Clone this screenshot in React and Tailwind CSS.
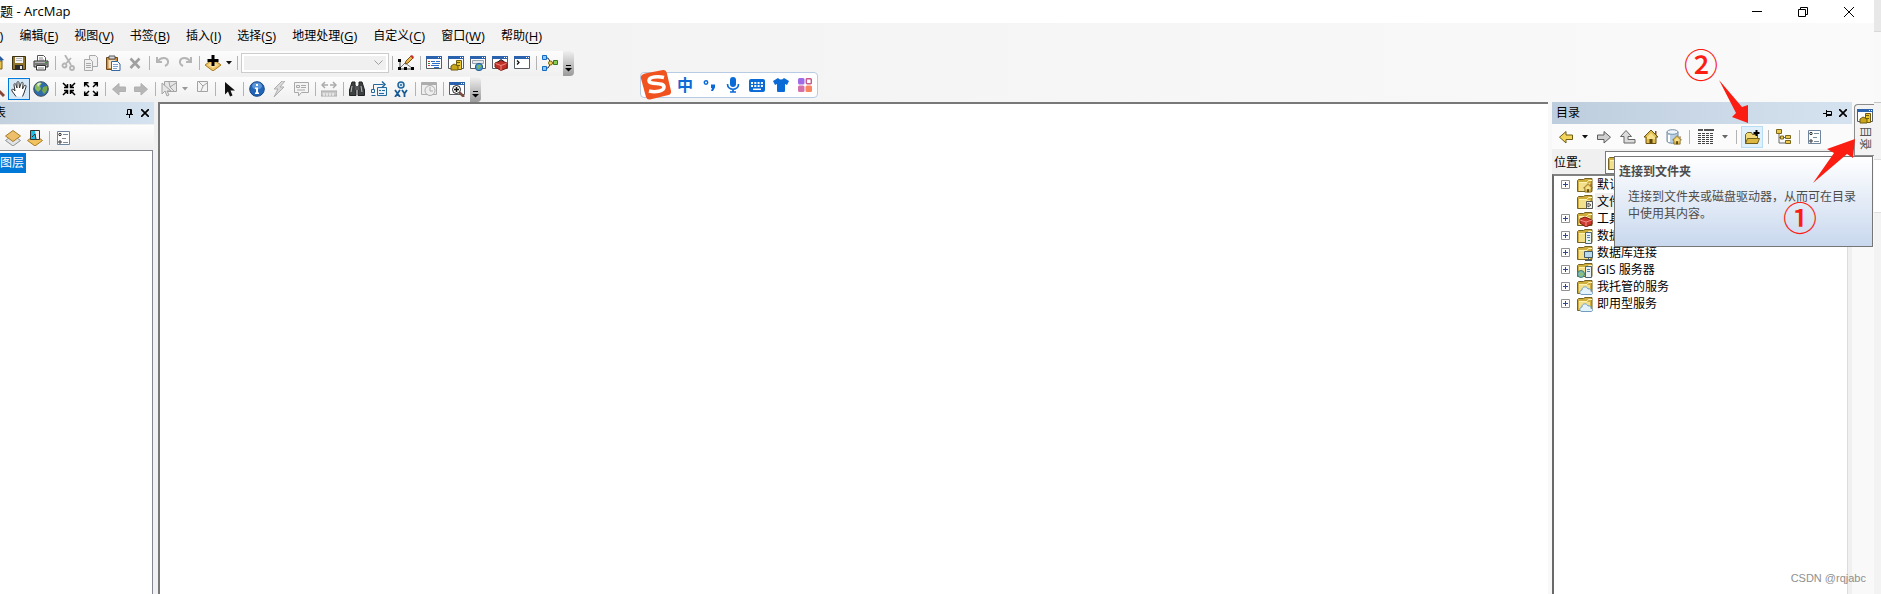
import clsx from 'clsx';

const menus = [
  ['文件', 'F'],
  ['编辑', 'E'],
  ['视图', 'V'],
  ['书签', 'B'],
  ['插入', 'I'],
  ['选择', 'S'],
  ['地理处理', 'G'],
  ['自定义', 'C'],
  ['窗口', 'W'],
  ['帮助', 'H'],
];

const treeItems = [
  { label: '默认', badge: 'home' },
  { label: '文件', badge: 'arrow', leaf: true, active: true },
  { label: '工具', badge: 'toolbox' },
  { label: '数据', badge: 'server' },
  { label: '数据库连接', badge: 'monitor' },
  { label: 'GIS 服务器', badge: 'gis' },
  { label: '我托管的服务', badge: 'cloud' },
  { label: '即用型服务', badge: 'cloud' },
];

// small pieces shared by several icons
const WindowFrame = ({ children }) => (
  <>
    <path d="M.5 1.500h15v12H.5z" fill="#fff" stroke="#565c64" />
    <path d="M0 1h16v3H0z" fill="#2b62ad" />
    <path d="M12 2h1v1h-1zM14 2h1v1h-1z" fill="#fff" />
    {children}
  </>
);

const House = () => (
  <>
    <path d="M8 1 1 8h2v6.500h10V8h2z" fill="#e0bb4e" stroke="#6b5311" />
    <path d="M12 2h1.500v4L12 5z" fill="#8a4b20" />
    <path d="M4 8l4-4 4 4v2H4z" fill="#f7e08c" />
    <path d="M6.500 10h3v4.500h-3z" fill="#5b4613" />
  </>
);

const ArrowLeft = ({ fill, stroke }) => (
  <path d="M8 2.500v3.500h6.500v4.500H8V14L1.500 8.200z" fill={fill} stroke={stroke} />
);

const icons = {
  open: (
    <>
      <path d="M1 6h12v8H1z" fill="#e6c14c" stroke="#7b5f10" />
      <path d="M7 1h4l4 4-3 1z" fill="#245a9c" />
    </>
  ),
  save: (
    <>
      <path d="M1.500 1.500h13v13h-13z" fill="#8e7328" stroke="#3a3113" />
      <path d="M4 2h8v6H4z" fill="#f4f4f4" />
      <path d="M5 3.500h6M5 5.500h6" stroke="#b5b5b5" />
      <path d="M4 10h8v5H4z" fill="#2b2b2b" />
      <path d="M9 11h2v3H9z" fill="#e8e8e8" />
    </>
  ),
  print: (
    <>
      <path d="M4.500 6V.5h6l2 2V6" fill="#fff" stroke="#555" />
      <path d="M6 3h4M6 5h5" stroke="#888" />
      <path d="M1 6h14v6H1z" fill="#b8b8b8" stroke="#333" />
      <path d="M2 9h12" stroke="#333" />
      <path d="M3.500 10.500h9v4.500h-9z" fill="#fff" stroke="#333" />
      <path d="M5 13h6" stroke="#888" />
      <path d="M12 7h2v1h-2z" fill="#3a9a3a" />
    </>
  ),
  cut: (
    <g fill="none" stroke="#b4b4b4" strokeWidth="1.800">
      <path d="M4 0l6 10M10 3L5 8.500" />
      <circle cx="3.500" cy="10.500" r="2" />
      <circle cx="11" cy="13" r="2" />
    </g>
  ),
  copy: (
    <g fill="#f1f1f1" stroke="#a9a9a9">
      <path d="M6.500.5h6l2 2v9h-8z" />
      <path d="M1.500 4.500h6l2 2v9h-8z" />
      <path d="M3 8.500h5M3 10.500h5M3 12.500h5" />
    </g>
  ),
  paste: (
    <>
      <path d="M1.500 2.500h11v12h-11z" fill="#c98f45" stroke="#6e4818" />
      <path d="M4 1h6v3H4z" fill="#d9d9d9" stroke="#555" />
      <path d="M3.500 5h7v8h-7z" fill="#f2dfbd" />
      <path d="M6.500 6.500h6l2.500 2.500v6.500H6.500z" fill="#fff" stroke="#35689f" />
      <path d="M8 9.500h5M8 11.500h5M8 13.500h4" stroke="#7da4cf" />
    </>
  ),
  remove: <path d="M3.500 3.500l9 9.500M12.500 3.500l-9 9.500" stroke="#a0a0a0" strokeWidth="2.600" />,
  undo: (
    <path d="M2 2v5h5M3 6c3-4 9-4 10 0 .6 3-1 4-3 5" fill="none" stroke="#b5b5b5" strokeWidth="2" />
  ),
  redo: (
    <path d="M14 2v5H9M13 6c-3-4-9-4-10 0-.6 3 1 4 3 5" fill="none" stroke="#b5b5b5" strokeWidth="2" />
  ),
  addData: (
    <>
      <path d="M8 4l8 6-8 6-8-6z" fill="#edc566" stroke="#a67b22" />
      <path d="M8 7l5 3-5 3-5-3z" fill="#f8e0a0" />
      <path d="M8 0v11M2.500 5.500h11" stroke="#000" strokeWidth="3" />
    </>
  ),
  editor: (
    <>
      <path d="M2 5v9h12" fill="none" stroke="#444" />
      <path d="M2 13l5-5 7 5" fill="none" stroke="#777" />
      <path d="M0 4h3v3H0zM0 12h3v3H0zM6 12h3v3H6zM13 12h3v3h-3z" fill="#000" />
      <path d="M7 9l1-3 5-5 2 2-5 5z" fill="#e8b84c" stroke="#7c5414" />
      <path d="M12 1l2-1 2 2-1 2z" fill="#c8312b" />
    </>
  ),
  toc: (
    <WindowFrame>
      <path d="M2 6.500h2M2 10.500h2" stroke="#c63c2e" />
      <path d="M2 8.500h2" stroke="#2d8a3c" />
      <path d="M5 6.500h4M10 6.500h4M6 8.500h8M5 10.500h8M8 12.500h5" stroke="#2f6fc4" />
    </WindowFrame>
  ),
  catalog: (
    <WindowFrame>
      <path d="M8.500 5.500h5v9h-5z" fill="#e9c72d" stroke="#6f5b10" />
      <path d="M9 7h3v1H9zM9 10h3v1H9z" fill="#6f5b10" />
      <path d="M3 11l3-2 4 2v4H3z" fill="#c9a51c" stroke="#6f5b10" />
    </WindowFrame>
  ),
  search: (
    <WindowFrame>
      <path d="M2.500 5.500h11v3h-11z" fill="#e5e7eb" stroke="#9ca3af" />
      <circle cx="9" cy="12" r="3.700" fill="#4b93cf" stroke="#276091" />
      <path d="M7 11c2-2 3 0 4-1v2c-2 0-1 2-3 2z" fill="#79b861" />
    </WindowFrame>
  ),
  toolboxWindow: (
    <WindowFrame>
      <path d="M3 8l6-2.500 6 2.500v5l-6 2.500-6-3.500z" fill="#c22f28" stroke="#7d1815" />
      <path d="M3.500 8.500l5.500 2 5.500-2M9 10.500v5" fill="none" stroke="#ef8b80" />
      <path d="M6 7l3-2.500 3 2" fill="none" stroke="#222" />
    </WindowFrame>
  ),
  python: (
    <WindowFrame>
      <path d="M3 5.500l2 2-2 2" fill="none" stroke="#111" strokeWidth="1.300" />
    </WindowFrame>
  ),
  model: (
    <>
      <path d="M3 3h3l3 5h3M3 13h3l3-5" fill="none" stroke="#333" />
      <path d="M.5.500h4v4h-4zM.5 11.500h4v4h-4z" fill="#8cc6f5" stroke="#1469c2" />
      <circle cx="8.500" cy="8" r="2" fill="#f3d352" stroke="#7d650e" />
      <path d="M11.500 5.500h4v4h-4z" fill="#8ccb56" stroke="#3a7a1c" />
    </>
  ),
  zoomIn: (
    <>
      <circle cx="6" cy="6" r="4.500" fill="#eef5fb" stroke="#555" />
      <path d="M9 9l6 6" stroke="#8a4433" strokeWidth="3" />
    </>
  ),
  pan: (
    <path
      d="M5 15.500L1 10c-1-2 1-2.500 2-1l1 1-1-6c0-2 1.600-2 2 0l1 3V2c0-2 2-2 2 0l.5 5L10 2.500c.5-2 2.300-1.500 2 .5L11.500 8l1.500-3c1-1.500 2.500-.8 2 1l-2 6-1.500 3.500"
      fill="#fff"
      stroke="#333"
    />
  ),
  globe: (
    <>
      <circle cx="8" cy="8" r="7.300" fill="#2f6cab" stroke="#3f4f5c" />
      <path d="M2 5c2-4 6-4 7-3L7 5l1 3-3 3-3-3z" fill="#8abb58" />
      <path d="M10 6l4-1c1 4-1 6-3 8l-2-3z" fill="#76aa49" />
      <path d="M4 3c2-2 4-1 4-1L5 6z" fill="#fff" opacity=".7" />
    </>
  ),
  shrink: (
    <g stroke="#000" strokeWidth="1.500" fill="none">
      <path d="M2 2l4 4M3 6.500h3.500V3M14 2l-4 4M13 6.500H9.500V3M2 14l4-4M3 9.500h3.500V13M14 14l-4-4M13 9.500H9.500V13" />
    </g>
  ),
  expand: (
    <g stroke="#000" strokeWidth="1.500" fill="none">
      <path d="M6 6L2 2M1.700 5.500V1.700h3.800M10 6l4-4M14.300 5.500V1.700h-3.800M6 10l-4 4M1.700 10.500v3.800h3.800M10 10l4 4M14.300 10.500v3.800h-3.800" />
    </g>
  ),
  prev: <ArrowLeft fill="#b7b7b7" stroke="#b0b0b0" />,
  next: (
    <g transform="matrix(-1 0 0 1 16 0)">
      <ArrowLeft fill="#b7b7b7" stroke="#b0b0b0" />
    </g>
  ),
  select: (
    <g fill="#e6e6e6" stroke="#a3a3a3">
      <path d="M3.500.5h12v10h-12z" />
      <path d="M8 1l1 5 6-4M9 6l4 4" fill="none" />
      <path d="M1 2v11l3-3 2 5 2-1-2-4h4z" />
    </g>
  ),
  clear: (
    <g fill="#f4f4f4" stroke="#a3a3a3">
      <path d="M4.500.5h10v10h-10z" />
      <path d="M6 1l4 4 4-3M10 5l-2 5" fill="none" />
    </g>
  ),
  pointer: <path d="M4 1v12.500l3-3 2 5 2.500-1-2-5H14z" fill="#111" />,
  info: (
    <>
      <circle cx="8" cy="8" r="7.300" fill="#2265b8" stroke="#164683" />
      <ellipse cx="8" cy="5" rx="5" ry="3.500" fill="#5b95da" />
      <path d="M7 3h2v2H7zM6 6.500h3v5h1V13H6v-1.500h1V8H6z" fill="#fff" />
    </>
  ),
  bolt: <path d="M11 0L3 8h4l-4 8L13 6H9l5-6z" fill="#d9d9d9" stroke="#adadad" />,
  html: (
    <g fill="#f4f4f4" stroke="#a9a9a9">
      <path d="M1.500 1.500h14v10h-7l-3 3.500v-3.500h-4z" />
      <path d="M3.500 4.500h3v2h-3zM8 4.500h5M8 6.500h5M4 9h8" />
    </g>
  ),
  measure: (
    <g fill="none" stroke="#a9a9a9">
      <path d="M1 4h6M9 4h6" strokeWidth="1.500" />
      <path d="M4 1L1 4l3 3M12 1l3 3-3 3" strokeWidth="1.500" />
      <path d="M0 10h16v5H0z" fill="#c9c9c9" />
      <path d="M3 12v3M6 12v3M9 12v3M12 12v3" stroke="#fff" />
    </g>
  ),
  find: (
    <>
      <path d="M3 1h3v3l1 2v8.500H.5V9zM13 1h-3v3L9 6v8.500h6.500V9z" fill="#3d4041" stroke="#222" />
      <path d="M6 5h4v4H6z" fill="#555" />
      <path d="M3 5L2 11M12 5l1 6" stroke="#bbb" />
    </>
  ),
  route: (
    <g fill="none" stroke="#246a9e">
      <path d="M2.500 8V3.500h10" />
      <path d="M11 .500l3 3-3 3" strokeWidth="1.500" />
      <path d="M6.500 6.500h9v8h-9z" fill="#e8f2fa" />
      <path d="M.5 8.500h3v3h-3zM.5 14.500h4M8 9.500h2M11 9.500h3M8 12.500h5" />
    </g>
  ),
  goToXY: (
    <>
      <circle cx="8" cy="4" r="3" fill="#d7e9f7" stroke="#20659b" strokeWidth="1.500" />
      <circle cx="8" cy="4" r="1" fill="#20659b" />
      <path d="M2 9l5 7M7 9l-5 7M9 9l2.500 3.500V16M14 9l-2.500 3.500" fill="none" stroke="#195b92" strokeWidth="1.800" />
    </>
  ),
  time: (
    <g fill="#eee" stroke="#adadad">
      <path d="M.5 1.500h15v12H.5z" />
      <path d="M1 3h14" strokeWidth="2" />
      <circle cx="9" cy="9.500" r="5" />
      <path d="M9 6v4h3" fill="none" />
    </g>
  ),
  viewer: (
    <WindowFrame>
      <circle cx="7.500" cy="8.500" r="4" fill="#fff" stroke="#222" />
      <path d="M5 8.500h5M7.500 6v5" stroke="#111" strokeWidth="1.500" />
      <path d="M10.500 11.500L15 16" stroke="#7c4c3c" strokeWidth="2.500" />
    </WindowFrame>
  ),
  layers: (
    <>
      <path d="M8 5l7.500 5.500L8 16 .5 10.500z" fill="#e1e3e4" stroke="#8d9293" />
      <path d="M8 .500L15.500 6 8 11.500.5 6z" fill="#edbf6a" stroke="#a77b27" />
    </>
  ),
  source: (
    <>
      <path d="M8 5l7.500 5.500L8 16 .5 10.500z" fill="#f1c25e" stroke="#a77b27" />
      <path d="M3.500.5h9v9h-9z" fill="#1fbbe0" stroke="#333" />
      <path d="M8 1l4 0v8H9V5z" fill="#eee" />
      <path d="M5 7l3-3 1 5" fill="none" stroke="#333" />
    </>
  ),
  options: (
    <>
      <path d="M2.500 1.500h12v13h-12z" fill="#fff" stroke="#6f859e" />
      <path d="M8 4.500h5M7 8.500h4M8 12.500h5" stroke="#7e8b99" />
      <circle cx="5" cy="4.500" r="1.200" fill="none" stroke="#222" />
      <circle cx="5" cy="12" r="1.200" fill="none" stroke="#222" />
    </>
  ),
  goBack: <ArrowLeft fill="#f2d45b" stroke="#6f5c15" />,
  goForward: (
    <g transform="matrix(-1 0 0 1 16 0)">
      <ArrowLeft fill="#d0d0d0" stroke="#5c5c5c" />
    </g>
  ),
  goUp: <path d="M6 1.500L.5 7.500H4v6.500h11v-3.500H8v-3h3.500z" fill="#dcdcdc" stroke="#666" />,
  home: <House />,
  database: (
    <>
      <path d="M1 3v9c0 3 11 3 11 0V3" fill="#b9d0e4" stroke="#7189a0" />
      <ellipse cx="6.500" cy="3" rx="5.500" ry="2.300" fill="#eef6fc" stroke="#7189a0" />
      <path d="M3 6v7" stroke="#fff" strokeWidth="2" />
      <g transform="translate(6 6) scale(.63)">
        <House />
      </g>
    </>
  ),
  table: (
    <g stroke="#444" shapeRendering="crispEdges">
      <path d="M0 1h16" strokeWidth="2" strokeDasharray="5 .5" stroke="#555" />
      <path d="M0 4.500h16M0 6.500h16M0 8.500h16M0 10.500h16M0 12.500h16M0 14.500h16" strokeDasharray="3 1" />
    </g>
  ),
  connect: (
    <>
      <path d="M1.500 14.500v-9l2-2h4l1 2h5v9z" fill="#f0d777" stroke="#6f5d1a" />
      <path d="M1.500 14.500l2-5h12l-2 5z" fill="#dcb840" stroke="#6f5d1a" />
      <path d="M12.500 1v6M9.500 4h6" stroke="#000" strokeWidth="2" />
    </>
  ),
  tree: (
    <>
      <path d="M3 4v10h6M3 8.500h6" fill="none" stroke="#666" />
      <path d="M.5.500h5v4h-5zM9.500 6.500h5v3h-5zM9.500 11.500h5v3h-5zM4.500 7h3v3h-3z" fill="#e9c94f" stroke="#7a651c" />
    </>
  ),
};

const Icon = ({ name, className = 'size-4' }) => (
  <svg viewBox="0 0 16 16" className={clsx('shrink-0', className)} aria-hidden="true">
    {icons[name]}
  </svg>
);

const badges = {
  home: (
    <g transform="translate(6 6) scale(.63)">
      <House />
    </g>
  ),
  arrow: <path d="M9.500 7.500h6v7h-6zM11 9l3 2-3 2z" fill="#f4f4e8" stroke="#555" />,
  toolbox: (
    <>
      <path d="M3 8l5-2 7 3v4l-6 3-6-4z" fill="#cc3a30" stroke="#7d1815" />
      <path d="M3 9l6 2 6-2M9 11v4" fill="none" stroke="#f09186" />
    </>
  ),
  server: (
    <>
      <path d="M8.500 4.500h6v11h-6z" fill="#e9f0f5" stroke="#4d6475" />
      <path d="M10 7.500h3M10 9.500h3" stroke="#4f83ab" />
      <path d="M11 12.500h2" stroke="#3b9b47" />
    </>
  ),
  monitor: (
    <>
      <path d="M7.500 6.500h8v6h-8z" fill="#b8d9ed" stroke="#45586a" />
      <path d="M11.500 13v2M8 15.500h7" stroke="#45586a" />
    </>
  ),
  gis: (
    <>
      <path d="M8.500 4.500h6v11h-6z" fill="#e9f0f5" stroke="#4d6475" />
      <path d="M10 7.500h3M10 9.500h3" stroke="#4f83ab" />
      <circle cx="4" cy="12" r="3.500" fill="#79b9bf" stroke="#417c6a" />
      <path d="M2 11l3-1 1 3-3 1z" fill="#8fc06a" />
    </>
  ),
  cloud: (
    <path d="M5 15.500c-3 0-3-4 0-4.500 0-4 5-4 6-1 2-1 3 1 3 2.500 3 0 2 3 0 3z" fill="#e4f2fc" stroke="#6f9cbf" />
  ),
};

const FolderIcon = ({ badge }) => (
  <svg viewBox="0 0 16 16" className="size-4 shrink-0" aria-hidden="true">
    <path d="M.5 14.500v-11l1-1h5l1.500-1h7v13z" fill="#cfae3d" stroke="#756323" />
    <path d="M2 6h11v8H2z" fill="#f3e08c" />
    <path d="M2 5.500h8l1.500-2H15" fill="none" stroke="#fff3b4" />
    {badges[badge]}
  </svg>
);

const ToolButton = ({ name, label, active, className }) => (
  <button
    type="button"
    aria-label={label || name}
    className={clsx(
      'flex h-[22px] w-[22px] shrink-0 items-center justify-center',
      active && 'border border-[#0078d7] bg-[#d5e8f7]',
      className
    )}
  >
    <Icon name={name} />
  </button>
);

const Separator = ({ className = 'w-1.5' }) => (
  <span className={clsx('flex shrink-0 justify-center', className)}>
    <span className="h-[14px] w-px bg-[#b3b3b3]" />
  </span>
);

const Caret = ({ className = 'w-2.5', color = '#111' }) => (
  <button type="button" aria-label="更多" className={clsx('flex shrink-0 justify-center', className)}>
    <svg viewBox="0 0 6 4" className="h-1 w-1.5">
      <path d="M0 0h6L3 3.500z" fill={color} />
    </svg>
  </button>
);

const Overflow = () => (
  <button
    type="button"
    aria-label="工具条选项"
    className="ml-0.5 flex h-[25px] w-[11px] shrink-0 items-end justify-center rounded-r-sm bg-linear-to-b from-[#f0f0f0] to-[#9a9a9a] pb-1"
  >
    <svg viewBox="0 0 7 7" className="size-[7px]">
      <path d="M1 0h5v1H1z" fill="#000" />
      <path d="M0 3h7L3.500 6.500z" fill="#000" />
    </svg>
  </button>
);

const Toolbar = ({ label, children }) => (
  <div role="toolbar" aria-label={label} className="flex h-[26px] items-center overflow-hidden">
    <div className="-ml-3.5 flex h-[25px] items-center rounded-r-sm bg-linear-to-b from-[#fcfcfc] to-[#f0f0f0]">
      {children}
    </div>
  </div>
);

const Tools = ({ names }) => names.map((name) => <ToolButton key={name} name={name} />);

const TitleBar = () => (
  <header className="flex h-[23px] items-center justify-between overflow-hidden bg-white text-[13px]">
    <h1 className="-ml-[26px] whitespace-nowrap">无标题 - ArcMap</h1>
    <div className="mr-0.5 flex">
      <button type="button" aria-label="最小化" className="flex h-5 w-[46px] items-center justify-center">
        <span className="h-px w-2.5 bg-black" />
      </button>
      <button type="button" aria-label="还原" className="flex h-5 w-[46px] items-center justify-center">
        <svg viewBox="0 0 10 10" className="size-2.5" fill="none" stroke="#000">
          <path d="M.5 2.500h7v7h-7zM2.500 2V.5h7v7H8" />
        </svg>
      </button>
      <button type="button" aria-label="关闭" className="flex h-5 w-[46px] items-center justify-center">
        <svg viewBox="0 0 10 10" className="size-2.5" fill="none" stroke="#000">
          <path d="M0 0l10 10M10 0L0 10" />
        </svg>
      </button>
    </div>
  </header>
);

const MenuBar = () => (
  <nav className="flex h-[27px] items-center gap-4 overflow-hidden">
    {menus.map(([text, key]) => (
      <button key={key} type="button" className="flex items-center whitespace-nowrap first:-ml-[35px]">
        {text}
        <span className="text-[13px]">
          (<u className="underline-offset-2">{key}</u>)
        </span>
      </button>
    ))}
  </nav>
);

const Pin = ({ sideways }) => (
  <button type="button" aria-label="自动隐藏" className="flex size-4 items-center justify-center">
    <svg viewBox="0 0 9 9" className={clsx('size-[9px]', sideways && 'rotate-90')} fill="none" stroke="#000">
      <path d="M2.500 5V.5h4V5M1 5.500h7M4.500 6v3M5.500 1v4" />
    </svg>
  </button>
);

const CloseButton = () => (
  <button type="button" aria-label="关闭" className="flex size-4 items-center justify-center">
    <svg viewBox="0 0 8 8" className="size-2" fill="none" stroke="#000" strokeWidth="1.700">
      <path d="M0 0l8 8M8 0L0 8" />
    </svg>
  </button>
);

const Contents = () => (
  <aside className="flex w-[154px] shrink-0 flex-col">
    <div className="flex h-[22px] items-center overflow-hidden bg-linear-to-r from-[#c3d0de] to-[#d5e3f0]">
      <h2 className="-ml-[42px] flex-1 whitespace-nowrap">内容列表</h2>
      <Pin />
      <CloseButton />
      <span className="w-px" />
    </div>
    <div className="mt-px flex h-[25px] items-center bg-linear-to-b from-[#fdfdfd] to-[#f0f0f0] pl-0.5">
      <ToolButton name="layers" />
      <ToolButton name="source" />
      <Separator />
      <ToolButton name="options" />
    </div>
    <div className="mr-px flex-1 border-r border-t border-[#828790] bg-white pt-0.5">
      <span className="inline-block h-5 overflow-hidden bg-[#0078d7] pr-0.5 leading-5 text-white">图层</span>
    </div>
  </aside>
);

const Tooltip = () => (
  <div
    role="tooltip"
    className="absolute -right-[21px] top-[54px] z-10 h-[91px] w-[259px] border border-[#767676] bg-linear-to-b from-white to-[#c9d8ee] px-1 pt-1.5 text-[#4c4c4c]"
  >
    <strong className="block font-bold leading-[17px]">连接到文件夹</strong>
    <p className="mt-2 pl-[9px] leading-[17px]">
      连接到文件夹或磁盘驱动器，从而可在目录
      <br />
      中使用其内容。
    </p>
  </div>
);

const Catalog = () => (
  <aside className="relative flex w-[300px] shrink-0 flex-col bg-[#f0f0f0]">
    <div className="flex h-[22px] items-center bg-linear-to-r from-[#becddd] to-[#d5e3f0] pl-1">
      <h2 className="flex-1">目录</h2>
      <Pin sideways />
      <CloseButton />
      <span className="w-px" />
    </div>
    <div className="flex h-[25px] items-center bg-[#fbfbfb] pl-[3px]">
      <ToolButton name="goBack" />
      <Caret className="w-4" />
      <ToolButton name="goForward" />
      <span className="w-0.5" />
      <Tools names={['goUp']} />
      <span className="w-px" />
      <Tools names={['home']} />
      <span className="w-px" />
      <Tools names={['database']} />
      <Separator className="w-2" />
      <ToolButton name="table" className="ml-0.5" />
      <Caret className="w-4" color="#666" />
      <Separator />
      <ToolButton
        name="connect"
        label="连接到文件夹"
        className="ml-0.5 border border-[#b9dcf5] bg-[#e0f0fb]"
      />
      <Separator className="w-2.5" />
      <ToolButton name="tree" />
      <Separator className="w-2" />
      <ToolButton name="options" />
    </div>
    <div className="flex h-[25px] items-end gap-6 pl-0.5">
      <label htmlFor="location" className="leading-[23px]">
        位置:
      </label>
      <div className="flex h-[23px] flex-1 items-center border border-[#7a7a7a] bg-white pl-0.5">
        <FolderIcon badge="home" />
        <input id="location" className="w-full outline-none" />
      </div>
    </div>
    <div className="mr-1 flex-1 border-l-2 border-r border-t-2 border-l-[#696969] border-r-[#dcdcdc] border-t-[#828282] bg-white">
      <ul role="tree" className="pl-[7px]">
        {treeItems.map((item) => (
          <li key={item.label} role="treeitem" className="flex h-[17px] items-center">
            {item.leaf ? (
              <span className="w-[9px]" />
            ) : (
              <button type="button" aria-label="展开" className="size-[9px]">
                <svg viewBox="0 0 9 9" className="size-[9px]">
                  <path d="M.5.500h8v8h-8z" fill="#fff" stroke="#919191" />
                  <path d="M2 4.500h5M4.500 2v5" stroke="#33478f" />
                </svg>
              </button>
            )}
            <span className="ml-[7px] flex">
              <FolderIcon badge={item.badge} />
            </span>
            <span className={clsx('ml-0.5 px-0.5 leading-[17px]', item.active && 'bg-[#f0f0f0]')}>
              {item.label}
            </span>
          </li>
        ))}
      </ul>
    </div>
    <Tooltip />
  </aside>
);

const SideTabs = () => (
  <div className="w-[22px] shrink-0 bg-[#f9f9f9] pl-0.5 pt-0.5">
    <button
      type="button"
      className="flex h-[52px] w-full flex-col items-center gap-0.5 rounded-tl border-b border-l border-t border-[#8c8c8c] bg-[#f3f3f3] pt-[3px] text-[#555]"
    >
      <Icon name="catalog" />
      <span className="leading-4 [text-orientation:sideways] [writing-mode:vertical-rl]">目录</span>
    </button>
  </div>
);

// floating input method bar
const ImeBar = () => (
  <div className="absolute left-[640px] top-[72px] flex h-[26px] w-[178px] items-center rounded-sm border border-[#b7cbe4] bg-white text-[#0a6bd6]">
    <svg viewBox="0 0 32 32" className="-ml-px size-8 shrink-0">
      <path d="M5 4.500L23 1q3-.5 3.700 2.500L31 22q.5 3-2.500 4L10 30.500q-3 .5-4-2.500L.8 9Q.5 5.500 5 4.500z" fill="#f0531f" />
      <path d="M24 8.500c-6-1.500-15-1-15 3 0 5 15 1 15 6.500 0 4.500-9 5.500-15 4" fill="none" stroke="#fff" strokeWidth="3.600" />
    </svg>
    <button type="button" className="ml-px w-6 text-base font-bold leading-4">
      中
    </button>
    <button type="button" aria-label="标点" className="flex w-6 justify-center">
      <svg viewBox="0 0 12 12" className="size-3">
        <circle cx="3" cy="3.500" r="1.700" fill="none" stroke="currentColor" strokeWidth="1.500" />
        <path d="M8 5.500h4v3L10 12H8l1-3H8z" fill="currentColor" />
      </svg>
    </button>
    <button type="button" aria-label="语音" className="flex w-6 justify-center">
      <svg viewBox="0 0 14 16" className="h-4 w-3.5">
        <rect x="4" width="6" height="10" rx="3" fill="currentColor" />
        <path d="M1.500 7c0 7 11 7 11 0M4 15h6M7 12v3" fill="none" stroke="currentColor" strokeWidth="1.700" />
      </svg>
    </button>
    <button type="button" aria-label="软键盘" className="flex w-6 justify-center">
      <svg viewBox="0 0 16 13" className="h-[13px] w-4">
        <rect width="16" height="13" rx="2" fill="currentColor" />
        <path d="M2 4h12M2 7h12" stroke="#fff" strokeWidth="2" strokeDasharray="2 1.300" />
        <path d="M4 10.300h8" stroke="#fff" strokeWidth="1.500" />
      </svg>
    </button>
    <button type="button" aria-label="皮肤" className="flex w-6 justify-center">
      <svg viewBox="0 0 16 14" className="h-3.5 w-4">
        <path d="M5 0q3 3 6 0l5 3-2 4-2-1v7q0 1-1 1H5q-1 0-1-1V6L2 7 0 3z" fill="currentColor" />
      </svg>
    </button>
    <button type="button" aria-label="工具箱" className="flex w-6 justify-center">
      <svg viewBox="0 0 14 14" className="size-3.5">
        <rect width="6.500" height="6.500" rx="1.500" fill="#9f6ce8" />
        <rect x="8.300" y=".7" width="5" height="5" rx="1" fill="none" stroke="#c85a8d" strokeWidth="1.500" />
        <rect y="7.500" width="6.500" height="6.500" rx="1.500" fill="#d470aa" />
        <rect x="7.500" y="7.500" width="6.500" height="6.500" rx="1.500" fill="#fb8560" />
      </svg>
    </button>
  </div>
);

// numbered steps with arrows drawn over the window
const Steps = () => (
  <div className="pointer-events-none absolute right-0 top-0 z-20 h-[250px] w-[221px] text-[34px] font-medium leading-[34px] text-[#fb1d12]">
    <span className="absolute left-6 top-12">②</span>
    <span className="absolute left-[123px] top-[201px]">①</span>
    <svg viewBox="0 0 221 250" className="size-full" fill="#fb1d12">
      <path d="M59 80l23 27 6-2v18l-16-6 4-4z" />
      <path d="M153 183l21-30-7-4 28-10-2 19-6-4z" />
    </svg>
  </div>
);

const NeighbourWindow = () => (
  <div className="flex w-[7px] shrink-0 flex-col bg-[#f3f3f3]">
    <div className="h-8 border-b border-[#d8d8d8] bg-[#e8e8e8]" />
    <div className="h-[71px] border-b border-[#c4c4c4] bg-[#f9f9f9]" />
    <div className="h-[57px] border-b border-[#dedede]" />
    <div className="h-[53px] border-b border-[#dedede] bg-white" />
  </div>
);

export default function App() {
  return (
    <div className="relative flex h-screen overflow-hidden font-['Open_Sans','Noto_Sans_CJK_SC',sans-serif] text-xs text-black">
      <div className="flex min-w-0 flex-1 flex-col bg-linear-to-r from-[#f0f0f0] to-[#fafafa]">
        <TitleBar />
        <MenuBar />
        <Toolbar label="标准工具">
          <Tools names={['open', 'save', 'print']} />
          <Separator />
          <Tools names={['cut', 'copy', 'paste', 'remove']} />
          <Separator />
          <Tools names={['undo', 'redo']} />
          <Separator />
          <Tools names={['addData']} />
          <Caret />
          <Separator />
          <select
            aria-label="比例"
            disabled
            className="ml-px h-5 w-[148px] appearance-none border border-[#cccccc] bg-[#f0f0f0] outline-2 -outline-offset-3 outline-white"
          />
          <svg viewBox="0 0 9 6" className="-ml-[15px] mr-1.5 h-1.5 w-[9px]" fill="none" stroke="#a0a0a0">
            <path d="M.5.500l4 4 4-4" />
          </svg>
          <Separator />
          <Tools names={['editor']} />
          <Separator />
          <Tools names={['toc', 'catalog', 'search', 'toolboxWindow', 'python']} />
          <Separator />
          <Tools names={['model']} />
          <Overflow />
        </Toolbar>
        <Toolbar label="工具">
          <Tools names={['zoomIn']} />
          <ToolButton name="pan" active />
          <Tools names={['globe']} />
          <Separator />
          <Tools names={['shrink', 'expand']} />
          <Separator />
          <Tools names={['prev', 'next']} />
          <Separator />
          <Tools names={['select']} />
          <Caret color="#999" />
          <Tools names={['clear']} />
          <Separator />
          <Tools names={['pointer']} />
          <Separator />
          <Tools names={['info', 'bolt', 'html']} />
          <Separator />
          <Tools names={['measure']} />
          <Separator />
          <Tools names={['find', 'route', 'goToXY']} />
          <Separator />
          <Tools names={['time']} />
          <Separator />
          <Tools names={['viewer']} />
          <Overflow />
        </Toolbar>
        <div className="flex min-h-0 flex-1">
          <Contents />
          <main className="ml-1 mr-1 flex-1 border-l-2 border-t-2 border-[#787878] bg-white" />
          <Catalog />
          <SideTabs />
        </div>
      </div>
      <NeighbourWindow />
      <ImeBar />
      <Steps />
      <footer className="absolute bottom-2 right-[15px] z-20 font-['Liberation_Sans',sans-serif] text-[11px] leading-4 text-[#8f8f8f]">
        CSDN @rqjabc
      </footer>
    </div>
  );
}
